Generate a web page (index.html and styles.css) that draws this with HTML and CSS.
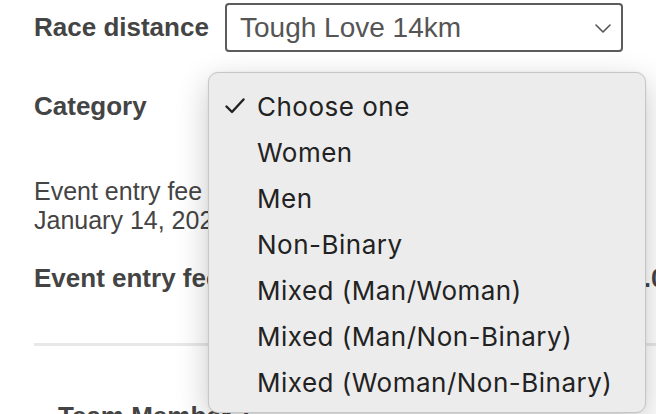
FILE: index.html
```html
<!DOCTYPE html>
<html lang="en">
<head>
<meta charset="utf-8">
<title>Race entry</title>
<link rel="stylesheet" href="styles.css">
</head>
<body>
<div class="form">
  <div class="field-row">
    <label class="field-label">Race distance</label>
    <div class="select">
      <span class="select-value">Tough Love 14km</span>
      <svg class="chevron" width="16" height="9" viewBox="0 0 16 9"><path d="M1 1 L8 8 L15 1" fill="none" stroke="#555" stroke-width="1.6" stroke-linecap="round" stroke-linejoin="round"/></svg>
    </div>
  </div>
  <div class="field-row">
    <label class="field-label">Category</label>
    <div class="select select-hidden"></div>
  </div>
  <p class="fee-note">Event entry fee valid until<br>January 14, 2024</p>
  <div class="fee-row">
    <span class="fee-label">Event entry fee</span>
    <span class="fee-value">$75.00</span>
  </div>
  <hr class="divider">
  <h3 class="team-title">Team Member 1</h3>
</div>

<div class="menu">
  <div class="menu-item"><span class="check"><svg width="20" height="16" viewBox="0 0 20 16"><path d="M1.5 8.5 L7 14 L18.5 1.5" fill="none" stroke="#222" stroke-width="2.4" stroke-linecap="round" stroke-linejoin="round"/></svg></span><span>Choose one</span></div>
  <div class="menu-item"><span class="check"></span><span>Women</span></div>
  <div class="menu-item"><span class="check"></span><span>Men</span></div>
  <div class="menu-item"><span class="check"></span><span>Non-Binary</span></div>
  <div class="menu-item"><span class="check"></span><span>Mixed (Man/Woman)</span></div>
  <div class="menu-item"><span class="check"></span><span>Mixed (Man/Non-Binary)</span></div>
  <div class="menu-item"><span class="check"></span><span>Mixed (Woman/Non-Binary)</span></div>
</div>
</body>
</html>
```

FILE: styles.css
```css
html, body {
  margin: 0;
  padding: 0;
  background: #fff;
  overflow: hidden;
}
body {
  font-family: "Liberation Sans", Arial, sans-serif;
  color: #444;
  width: 656px;
  height: 414px;
  position: relative;
}
.form {
  padding: 3px 0 0 34px;
  width: 646px;
}
.field-row {
  display: flex;
  align-items: center;
  height: 49px;
  margin-bottom: 30px;
}
.field-label {
  width: 191px;
  font-weight: bold;
  font-size: 26px;
  color: #444;
}
.select {
  box-sizing: border-box;
  width: 398px;
  height: 49px;
  border: 2px solid #5c5c5c;
  border-radius: 4px;
  display: flex;
  align-items: center;
  justify-content: space-between;
  padding: 0 10px 0 13px;
  font-size: 28px;
  color: #555;
}
.select-hidden {
  border-color: #bbb;
}
.chevron {
  display: block;
  margin-top: 1px;
}
.fee-note {
  margin: 46px 0 0 0;
  font-size: 25px;
  line-height: 29px;
  color: #444;
}
.fee-row {
  display: flex;
  justify-content: space-between;
  margin-top: 28px;
  font-size: 26px;
  line-height: 30px;
  font-weight: bold;
  color: #444;
}
.divider {
  margin: 50px 0 0 0;
  border: 0;
  height: 3px;
  background: #e8e8e8;
  width: 640px;
}
.team-title {
  margin: 55px 0 0 24px;
  font-size: 26px;
  line-height: 30px;
  font-weight: bold;
  color: #444;
}
.menu {
  position: absolute;
  left: 208px;
  top: 72px;
  width: 438px;
  height: 341px;
  box-sizing: border-box;
  background: #ececec;
  border: 1px solid #c6c6c6;
  border-radius: 10px;
  box-shadow: 0 10px 32px rgba(0, 0, 0, 0.22), 0 0 2px rgba(0, 0, 0, 0.08);
  padding-top: 10px;
  font-family: Inter, "Liberation Sans", sans-serif;
  font-size: 26px;
  letter-spacing: 0.5px;
  color: #222;
}
.menu-item {
  display: flex;
  align-items: center;
  height: 46px;
  padding-left: 16px;
}
.check {
  width: 32px;
  display: flex;
  align-items: center;
}
.check svg {
  display: block;
}
```
